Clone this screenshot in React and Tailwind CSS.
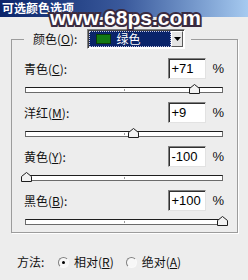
import React from "react";

const rows = [
  { name: "青色", key: "C", value: 71 },
  { name: "洋红", key: "M", value: 9 },
  { name: "黄色", key: "Y", value: -100 },
  { name: "黑色", key: "B", value: 100 },
];

function fmt(v) {
  return v > 0 ? `+${v}` : `${v}`;
}

function Slider({ value }) {
  const left = ((value + 100) / 200) * 196;
  return (
    <div className="h-[21px] flex items-center pl-px">
      <div className="relative w-[198px] h-[6px] bg-white border border-[#6b6b6b] border-t-[#1e1e1e]">
        {/* centre tick */}
        <div className="absolute left-[98px] top-px w-px h-[2px] bg-[#9a9a9a]" />
        <svg
          className="absolute top-[-4px]"
          style={{ left: `${left - 5}px` }}
          width="11"
          height="10"
          viewBox="0 0 11 10"
        >
          <polygon points="0.5,4.5 5.5,0.5 10.5,4.5 10.5,9.5 0.5,9.5" fill="#f2f2f2" stroke="#1e1e1e" />
        </svg>
      </div>
    </div>
  );
}

function Row({ name, k, value }) {
  return (
    <div>
      <div className="h-[21px] flex items-center justify-between">
        <span>
          {name}(<u>{k}</u>):
        </span>
        <div className="flex items-center">
          <div className="w-[38px] h-[21px] bg-white border border-[#808080] border-b-[#e2e2e2] border-r-[#e2e2e2] shadow-[inset_1px_1px_0_#303030] pl-[2px] text-[13px] leading-[19px] font-['Liberation_Sans',sans-serif] text-black">
            {fmt(value)}
          </div>
          <span className="ml-[6px] text-[13px] font-['Liberation_Sans',sans-serif]">%</span>
        </div>
      </div>
      <Slider value={value} />
    </div>
  );
}

function Radio({ checked }) {
  return (
    <div className="w-[11px] h-[11px] rounded-full border border-[#808080] border-b-[#fafafa] border-r-[#fafafa] bg-[#f7f7f7] flex items-center justify-center">
      {checked && <div className="w-[3px] h-[3px] rounded-full bg-black" />}
    </div>
  );
}

export default function App() {
  return (
    <div className="relative w-[248px] h-[280px] overflow-hidden bg-[#ededed] text-[12px] text-[#111] font-['Noto_Sans_CJK_SC',sans-serif]">
      {/* title bar */}
      <div className="h-[17px] bg-linear-to-r from-[#0a246a] via-[#3b5a9c] to-[#a6caf0] pl-[2px] text-white font-bold leading-[15px]">
        可选颜色选项
      </div>

      {/* watermark */}
      <div className="absolute left-[50px] top-[7px] text-[21px] leading-[21px] font-bold text-white font-['Liberation_Sans',sans-serif] [-webkit-text-stroke:4px_#3a2b40] [paint-order:stroke_fill]">
        www.68ps.com
      </div>

      <fieldset className="mt-[12px] ml-[11px] w-[227px] border border-[#9c9c9c] shadow-[1px_1px_0_#fff] pl-[12px] pr-[13px] pt-[9px]">
        <legend className="pl-[9px] pr-[6px] flex items-center">
          <span>
            颜色(<u>O</u>):
          </span>
          <div className="ml-[10px] flex w-[98px] h-[20px] border border-[#808080] border-b-white border-r-white shadow-[inset_1px_1px_0_#404040] p-px bg-white">
            <div className="flex-1 flex items-center bg-[#0a246a] border border-dotted border-[#c8c8e0]">
              <div className="ml-[6px] w-[15px] h-[10px] bg-[#137a13] border border-[#0b3a0b]" />
              <span className="ml-[5px] text-white leading-none">绿色</span>
            </div>
            <div className="w-[12px] flex items-center justify-center bg-[#e4e4e4] border border-white border-b-[#5a5a5a] border-r-[#5a5a5a]">
              <svg width="7" height="4" viewBox="0 0 7 4">
                <polygon points="0,0 7,0 3.5,4" fill="#000" />
              </svg>
            </div>
          </div>
        </legend>
        <div className="flex flex-col gap-[2px]">
          {rows.map((r) => (
            <Row key={r.key} name={r.name} k={r.key} value={r.value} />
          ))}
        </div>
      </fieldset>

      <div className="mt-[22px] pl-[17px] flex items-center h-[14px]">
        <span className="w-[41px]">方法:</span>
        <Radio checked />
        <span className="ml-[5px]">
          相对(<u>R</u>)
        </span>
        <div className="ml-[12px]">
          <Radio />
        </div>
        <span className="ml-[5px]">
          绝对(<u>A</u>)
        </span>
      </div>
    </div>
  );
}
